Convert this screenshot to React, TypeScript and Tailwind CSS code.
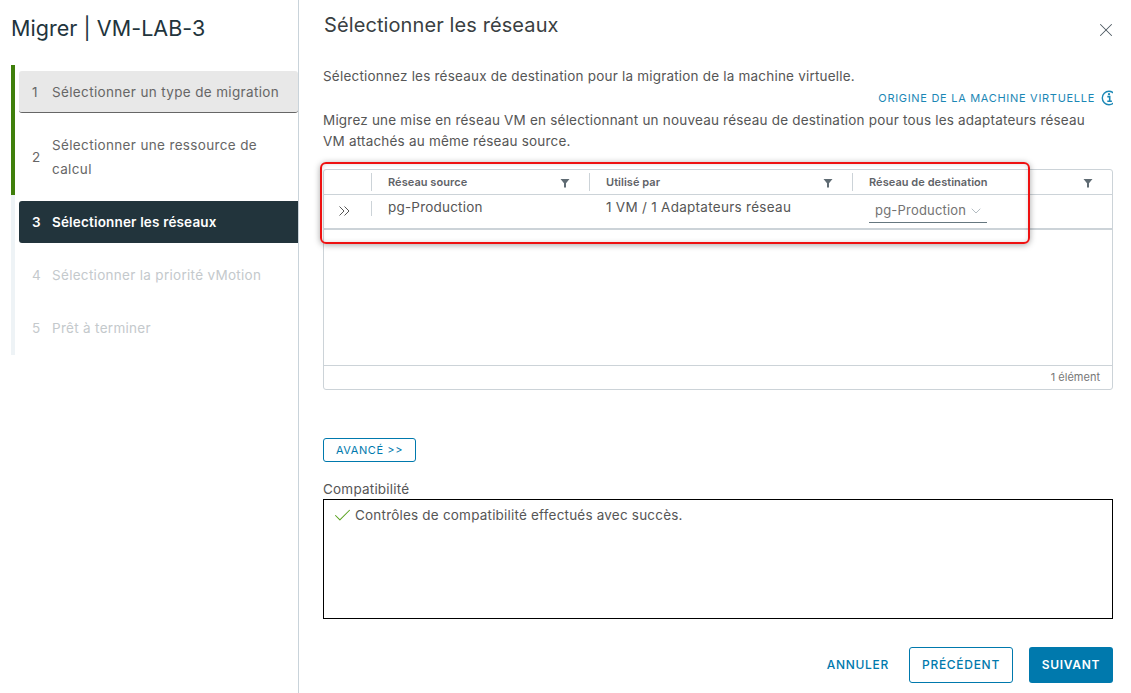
import { X, ChevronDown, Check } from "lucide-react";

const font = "font-['Inter','Liberation_Sans',sans-serif]";

function FilterIcon() {
  return (
    <svg width="10" height="10" viewBox="0 0 10 10" className="shrink-0">
      <path d="M0.5 1h9L6 5.2V9.5H4V5.2z" fill="#5f6b73" />
    </svg>
  );
}

function HeaderCell({ label, filter = true }: { label: string; filter?: boolean }) {
  return (
    <div className="relative flex h-[25px] items-center pl-[17px] pr-[19px]">
      <span className="absolute left-0 top-[3px] h-[18px] w-px bg-[#ccd3d8]" />
      <span className="flex-1 text-[11px] font-semibold tracking-[0.05px] text-[#5f6368]">{label}</span>
      {filter && <FilterIcon />}
    </div>
  );
}

function Step({
  n,
  label,
  tone,
}: {
  n: number;
  label: string;
  tone: "done" | "idle" | "active" | "off";
}) {
  const cls =
    tone === "done"
      ? "bg-[#e8e8e8] border-b border-[#666] text-[#666] rounded-[3px] h-[42px] tracking-[0.35px]"
      : tone === "active"
        ? "bg-[#22343c] text-white font-semibold rounded-l-[3px] h-[42px] tracking-[0.17px]"
        : tone === "off"
          ? "text-[#c4c9cc] h-[42px] tracking-[0.3px]"
          : "text-[#666] h-[66px] tracking-[0.35px]";
  return (
    <div className={`flex items-center text-[13.5px] leading-[24px] ${cls}`}>
      <span className="w-[33px] shrink-0 pl-[13px]">{n}</span>
      <span className="pr-[12px]">{label}</span>
    </div>
  );
}

export default function App() {
  return (
    <div className={`flex h-[693px] w-[1131px] overflow-hidden bg-white ${font}`}>
      <aside className="h-full w-[299px] shrink-0 border-r border-[#c9d3da] pl-[11px]">
        <h1 className="pt-[14px] text-[21.5px] leading-[28px] tracking-[0.05px] text-[#22343c]">Migrer | VM-LAB-3</h1>
        <div className="relative mt-[23px] flex flex-col gap-[11px] py-[6px] pl-[8px]">
          <span className="absolute bottom-0 left-0 top-0 w-[4px] bg-[#eef3f6]" />
          <span className="absolute left-0 top-0 h-[130px] w-[4px] bg-[#3f7f0b]" />
          <Step n={1} label="Sélectionner un type de migration" tone="done" />
          <div className="pr-[20px]">
            <Step n={2} label="Sélectionner une ressource de calcul" tone="idle" />
          </div>
          <Step n={3} label="Sélectionner les réseaux" tone="active" />
          <Step n={4} label="Sélectionner la priorité vMotion" tone="off" />
          <Step n={5} label="Prêt à terminer" tone="off" />
        </div>
      </aside>

      <main className="relative flex h-full w-[832px] flex-col pl-[24px] pr-[18px] text-[13.5px] tracking-[0.2px] text-[#565656]">
        <div className="flex h-[67px] items-start justify-between">
          <h2 className="pl-px pt-[11px] text-[20px] leading-[28px] tracking-[0.1px] text-[#3a3f42]">
            Sélectionner les réseaux
          </h2>
          <button className="mr-[-4px] mt-[19px] text-[#4f5b63]">
            <X size={22} strokeWidth={1.1} />
          </button>
        </div>
        <p className="leading-[18px]">
          Sélectionnez les réseaux de destination pour la migration de la machine virtuelle.
        </p>
        <div className="mt-[3px] flex h-[20px] items-center justify-end overflow-hidden">
          <span className="text-[11px] uppercase tracking-[0.7px] text-[#1b87b5]">
            Origine de la machine virtuelle
          </span>
          <span className="ml-[6px] w-[12px] shrink-0 overflow-hidden">
            <svg width="16" height="16" viewBox="0 0 16 16" fill="none">
              <circle cx="8" cy="8" r="6.7" stroke="#1b87b5" strokeWidth="1.4" />
              <path d="M6.3 6.6h2.4v4.4M6.3 11.2h4.6" stroke="#1b87b5" strokeWidth="1.6" />
              <circle cx="8" cy="4.2" r="1.1" fill="#1b87b5" />
            </svg>
          </span>
        </div>
        <p className="mt-[2px] pr-[20px] leading-[21px]">
          Migrez une mise en réseau VM en sélectionnant un nouveau réseau de destination pour tous les adaptateurs réseau VM attachés au même réseau source.
        </p>

        <div className="mt-[17px] flex h-[221px] flex-col rounded-[3px] border border-[#ccd3d8]">
          <div className="grid h-[25px] grid-cols-[47px_218px_263px_1fr] border-b border-[#ccd3d8]">
            <div />
            <HeaderCell label="Réseau source" />
            <HeaderCell label="Utilisé par" />
            <HeaderCell label="Réseau de destination" />
          </div>
          <div className="grid h-[35px] grid-cols-[47px_218px_263px_1fr] border-b-2 border-[#ccd3d8]">
            <div className="flex items-center pb-[2px] pl-[15px]">
              <svg width="12" height="10" viewBox="0 0 12 10" fill="none" stroke="#565656" strokeWidth="1">
                <path d="M0.5 0.5L5 5L0.5 9.5M5.5 0.5L10 5L5.5 9.5" />
              </svg>
            </div>
            <div className="relative pl-[17px] pt-[2px] leading-[20px]">
              <span className="absolute left-0 top-[6px] h-[15px] w-px bg-[#ccd3d8]" />
              pg-Production
            </div>
            <div className="pl-[17px] pt-[2px] leading-[20px] tracking-[0.28px]">1 VM / 1 Adaptateurs réseau</div>
            <div className="pl-[17px]">
              <div className="mt-[5px] flex h-[23px] w-[118px] items-center border-b border-[#66777f] pl-[6px] text-[13px] tracking-[0.2px] text-[#737373]">
                <span className="flex-1">pg-Production</span>
                <ChevronDown size={16} strokeWidth={1} className="mr-[3px] text-[#8c9aa3]" />
              </div>
            </div>
          </div>
          <div className="flex-1" />
          <div className="flex h-[24px] items-center justify-end border-t border-[#ccd3d8] pr-[12px] text-[11px] tracking-normal text-[#777]">
            1 élément
          </div>
        </div>

        <button className="mt-[48px] h-[24px] w-[93px] rounded-[3px] border border-[#0079ad] text-[11px] tracking-[0.6px] text-[#0079ad]">
          AVANCÉ &gt;&gt;
        </button>
        <div className="mt-[18px] leading-[18px]">Compatibilité</div>
        <div className="mt-px flex h-[120px] items-start border border-black pl-[8px] pt-[7px] leading-[17px]">
          <Check size={21} strokeWidth={1.2} className="mr-[2px] mt-[-2px] text-[#5aa220]" />
          Contrôles de compatibilité effectués avec succès.
        </div>

        <div className="mt-[28px] flex h-[36px] items-center justify-end text-[12px] font-medium tracking-[0.7px]">
          <button className="mr-[20px] text-[#0079ad]">ANNULER</button>
          <button className="mr-[16px] h-[36px] w-[104px] rounded-[3px] border border-[#0079ad] text-[#0079ad]">
            PRÉCÉDENT
          </button>
          <button className="h-[36px] w-[84px] rounded-[3px] bg-[#0079ad] font-semibold text-white">
            SUIVANT
          </button>
        </div>

        <div className="absolute left-[21px] top-[162px] h-[82px] w-[710px] rounded-[6px] border-2 border-[#ee1111] shadow-[0_1px_6px_rgba(0,0,0,0.35),inset_0_0_4px_rgba(0,0,0,0.15)]" />
      </main>
    </div>
  );
}
